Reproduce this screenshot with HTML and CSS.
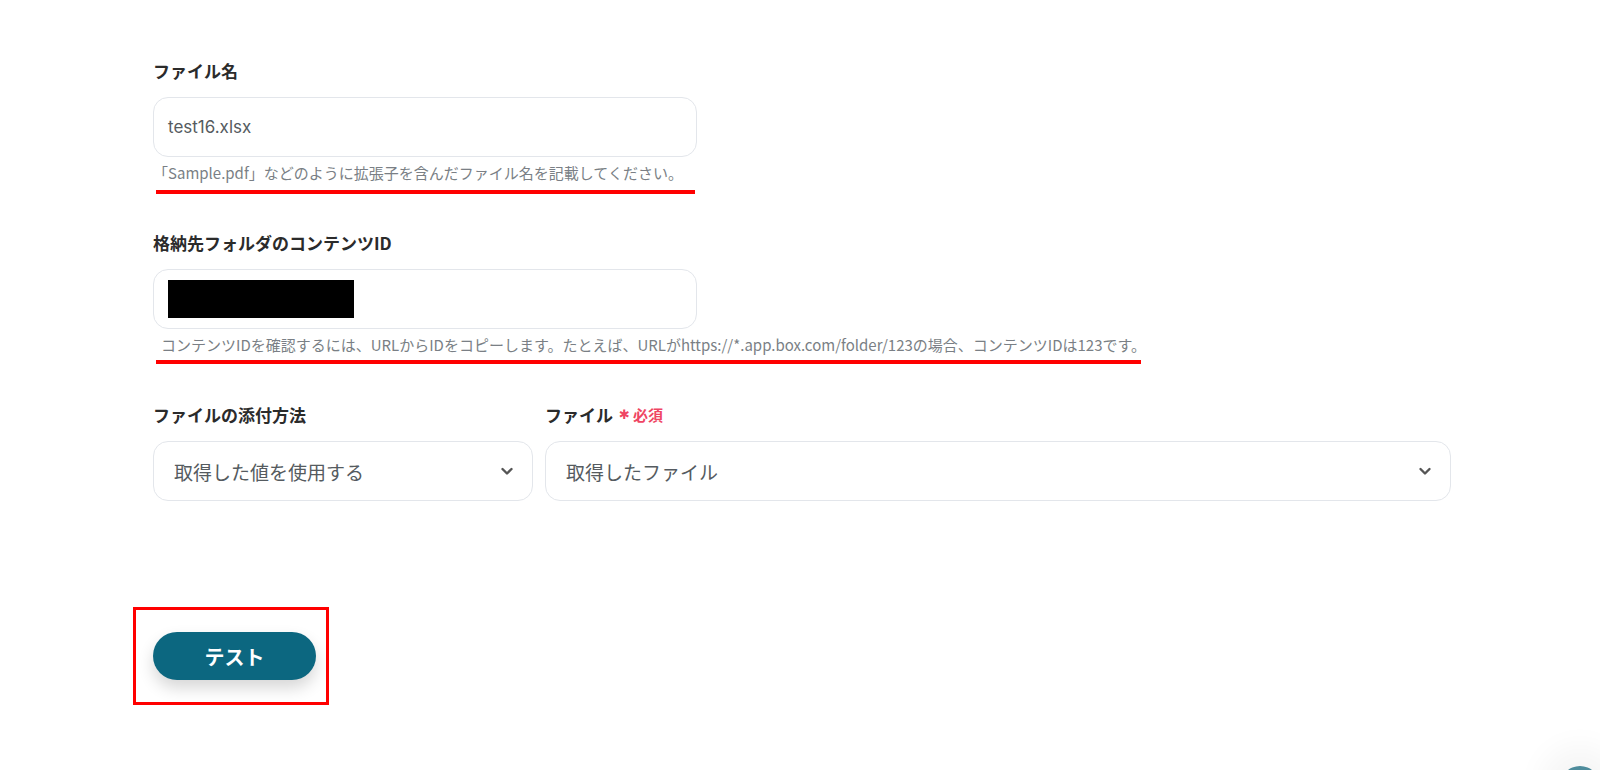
FILE: index.html
```html
<!DOCTYPE html>
<html lang="ja">
<head>
<meta charset="utf-8">
<title>Box ファイルアップロード</title>
<link rel="stylesheet" href="styles.css">
</head>
<body>
<main class="page">
  <section class="field field-name">
    <div class="label">ファイル名</div>
    <div class="input"><span class="input-text">test16.xlsx</span></div>
    <div class="hint">「Sample.pdf」などのように拡張子を含んだファイル名を記載してください。</div>
    <div class="underline underline-short"></div>
  </section>

  <section class="field field-folder">
    <div class="label">格納先フォルダのコンテンツID</div>
    <div class="input"><span class="redact"></span></div>
    <div class="hint hint-indent">コンテンツIDを確認するには、URLからIDをコピーします。たとえば、URLがhttps://*.app.box.com/folder/123の場合、コンテンツIDは123です。</div>
    <div class="underline underline-long"></div>
  </section>

  <section class="row">
    <div class="col col-method">
      <div class="label">ファイルの添付方法</div>
      <div class="select">
        <span class="select-text">取得した値を使用する</span>
        <svg class="chev" width="14" height="9" viewBox="0 0 14 9"><path d="M2.5 2 L7 6.5 L11.5 2" fill="none" stroke="#555" stroke-width="2.4" stroke-linecap="round" stroke-linejoin="round"/></svg>
      </div>
    </div>
    <div class="col col-file">
      <div class="label">ファイル<span class="req"><span class="ast">✱</span>必須</span></div>
      <div class="select">
        <span class="select-text">取得したファイル</span>
        <svg class="chev" width="14" height="9" viewBox="0 0 14 9"><path d="M2.5 2 L7 6.5 L11.5 2" fill="none" stroke="#555" stroke-width="2.4" stroke-linecap="round" stroke-linejoin="round"/></svg>
      </div>
    </div>
  </section>

  <div class="btn-frame">
    <button class="btn">テスト</button>
  </div>
</main>
<div class="fab"></div>
</body>
</html>
```

FILE: styles.css
```css
html, body {
  margin: 0;
  padding: 0;
  background: #ffffff;
}
body {
  font-family: "Noto Sans CJK JP", "Noto Sans", sans-serif;
  color: #2a2a2a;
  width: 1600px;
  height: 770px;
  overflow: hidden;
  position: relative;
}
.page {
  padding: 59px 0 0 153px;
  display: flex;
  flex-direction: column;
}
.field {
  display: flex;
  flex-direction: column;
  width: 544px;
}
.field-folder {
  margin-top: 37px;
}
.label {
  font-size: 17px;
  font-weight: 700;
  line-height: 24px;
  height: 24px;
  display: flex;
  align-items: center;
  color: #2b2b2b;
}
.input {
  margin-top: 14px;
  height: 60px;
  box-sizing: border-box;
  border: 1.5px solid #e3e6eb;
  border-radius: 15px;
  display: flex;
  align-items: center;
  padding: 0 14px;
  background: #fff;
}
.input-text {
  font-family: "Inter", "Noto Sans", sans-serif;
  font-size: 17px;
  color: #555b60;
}
.redact {
  display: block;
  width: 186px;
  height: 38px;
  background: #000;
}
.hint {
  margin-top: 6px;
  font-size: 15px;
  line-height: 20px;
  color: #7a7f85;
  white-space: nowrap;
}
.hint-indent {
  padding-left: 8px;
}
.underline {
  height: 4px;
  background: #ff0000;
  margin-left: 3px;
}
.underline-short {
  margin-top: 7px;
  width: 539px;
}
.underline-long {
  margin-top: 5px;
  width: 985px;
}
.row {
  margin-top: 39px;
  display: flex;
  gap: 12px;
}
.col {
  display: flex;
  flex-direction: column;
}
.col-method { width: 380px; }
.col-file { width: 906px; }
.req {
  color: #ef4563;
  font-size: 15px;
  font-weight: 700;
  margin-left: 6px;
  display: flex;
  align-items: center;
}
.ast {
  font-family: "DejaVu Sans", sans-serif;
  font-size: 13px;
  margin-right: 3px;
}
.select {
  margin-top: 14px;
  height: 60px;
  box-sizing: border-box;
  border: 1.5px solid #e3e6eb;
  border-radius: 15px;
  display: flex;
  align-items: center;
  justify-content: space-between;
  padding: 0 18px 0 20px;
  background: #fff;
}
.select-text {
  font-size: 19px;
  color: #555b60;
}
.chev {
  display: block;
}
.btn-frame {
  margin-top: 106px;
  width: 173px;
  height: 92px;
  border: 3px solid #ff0000;
  margin-left: -20px;
  display: flex;
  align-items: center;
  padding-left: 17px;
  box-sizing: content-box;
}
.btn {
  width: 163px;
  height: 48px;
  border: none;
  border-radius: 24px;
  background: #0c6780;
  color: #fff;
  font-family: "Noto Sans CJK JP", sans-serif;
  font-size: 20px;
  font-weight: 700;
  box-shadow: 0 8px 16px rgba(0, 0, 0, 0.16);
  padding: 0;
}
.fab {
  position: absolute;
  left: 1560px;
  top: 766px;
  width: 40px;
  height: 40px;
  border-radius: 50%;
  background: #4e8c9c;
  box-shadow: 0 0 30px 20px rgba(0, 0, 0, 0.04);
}
```
